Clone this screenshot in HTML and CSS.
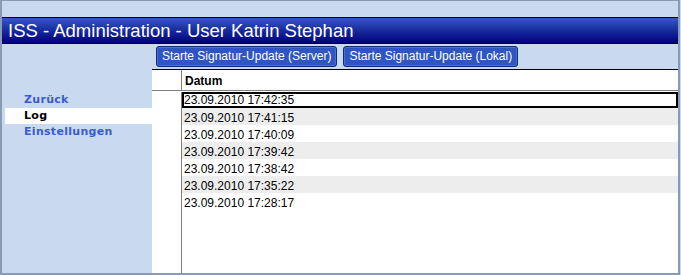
FILE: index.html
```html
<!DOCTYPE html>
<html lang="de">
<head>
  <meta charset="UTF-8">
  <title>ISS - Administration</title>
  <link rel="stylesheet" href="styles.css">
</head>
<body>
  <div class="frame">
    <div class="top-gap"></div>
    <div class="titlebar">ISS - Administration - User Katrin Stephan</div>
    <div class="toolbar">
      <button class="tool-btn" type="button">Starte Signatur-Update (Server)</button>
      <button class="tool-btn" type="button">Starte Signatur-Update (Lokal)</button>
    </div>
    <div class="main">
      <div class="sidebar">
        <a class="nav-item" href="#">Zurück</a>
        <a class="nav-item active" href="#">Log</a>
        <a class="nav-item" href="#">Einstellungen</a>
      </div>
      <div class="grid">
        <div class="grid-row grid-head">
          <div class="row-head"></div>
          <div class="cell">Datum</div>
        </div>
        <div class="grid-row selected"><div class="row-head"></div><div class="cell">23.09.2010 17:42:35</div></div>
        <div class="grid-row alt"><div class="row-head"></div><div class="cell">23.09.2010 17:41:15</div></div>
        <div class="grid-row"><div class="row-head"></div><div class="cell">23.09.2010 17:40:09</div></div>
        <div class="grid-row alt"><div class="row-head"></div><div class="cell">23.09.2010 17:39:42</div></div>
        <div class="grid-row"><div class="row-head"></div><div class="cell">23.09.2010 17:38:42</div></div>
        <div class="grid-row alt"><div class="row-head"></div><div class="cell">23.09.2010 17:35:22</div></div>
        <div class="grid-row"><div class="row-head"></div><div class="cell">23.09.2010 17:28:17</div></div>
        <div class="grid-row filler"><div class="row-head"></div><div class="cell"></div></div>
      </div>
    </div>
  </div>
</body>
</html>
```

FILE: styles.css
```css
html, body {
  margin: 0;
  padding: 0;
  background: #c9daf0;
  font-family: 'Liberation Sans', Arial, sans-serif;
}
.frame {
  width: 680px;
  height: 275px;
  box-sizing: border-box;
  border-top: 1px solid #8a9ab3;
  border-left: 2px solid #8a9ab3;
  border-right: 2px solid #8a9ab3;
  border-bottom: 2px solid #8a9ab3;
  display: flex;
  flex-direction: column;
  background: #c9daf0;
}
.top-gap {
  height: 16px;
}
.titlebar {
  height: 25px;
  border-top: 1px solid #000;
  border-bottom: 1px solid #000;
  background: linear-gradient(180deg, #3558c8 0%, #1a2fa0 45%, #00007e 100%);
  color: #fff;
  font-size: 18.5px;
  line-height: 25px;
  padding-left: 6px;
  white-space: nowrap;
}
.toolbar {
  height: 25px;
  display: flex;
  align-items: flex-start;
  gap: 6px;
  padding: 2px 0 0 154px;
  box-sizing: border-box;
}
.tool-btn {
  height: 21px;
  padding: 0 5px;
  background: #2e55c2;
  border: 1px solid #14287a;
  border-radius: 3px;
  box-shadow: inset 0 0 0 1px #4a70d8;
  color: #fff;
  font-family: 'Liberation Sans', Arial, sans-serif;
  font-size: 12px;
  line-height: 19px;
  cursor: pointer;
}
.main {
  flex: 1;
  display: flex;
  min-height: 0;
}
.sidebar {
  width: 150px;
  box-sizing: border-box;
  display: flex;
  flex-direction: column;
  padding-top: 23px;
  padding-left: 3px;
}
.nav-item {
  display: block;
  height: 16px;
  line-height: 16px;
  padding-left: 19px;
  font-family: 'DejaVu Sans', Tahoma, sans-serif;
  font-weight: bold;
  font-size: 11px;
  letter-spacing: 0.3px;
  color: #3a5ccc;
  text-decoration: none;
}
.nav-item.active {
  background: #fff;
  color: #000;
}
.grid {
  flex: 1;
  background: #fff;
  border-top: 1px solid #000;
  display: flex;
  flex-direction: column;
}
.grid-row {
  display: flex;
  height: 17px;
  font-size: 12px;
  line-height: 17px;
  color: #000;
}
.row-head {
  width: 29px;
  border-right: 1px solid #808080;
  flex-shrink: 0;
}
.cell {
  flex: 1;
  box-sizing: border-box;
  padding: 2px 0 0 2px;
  overflow: hidden;
  white-space: nowrap;
}
.grid-head {
  height: 20px;
  font-weight: bold;
  border-bottom: 1px solid #808080;
}
.grid-head .cell {
  padding: 2px 0 0 3px;
  line-height: 18px;
}
.selected {
  margin-top: 1px;
  height: 16px;
}
.selected .cell {
  border: 2px solid #000;
  line-height: 13px;
  padding: 0;
}
.alt .cell {
  background: #ededed;
}
.filler {
  flex: 1;
}
```
